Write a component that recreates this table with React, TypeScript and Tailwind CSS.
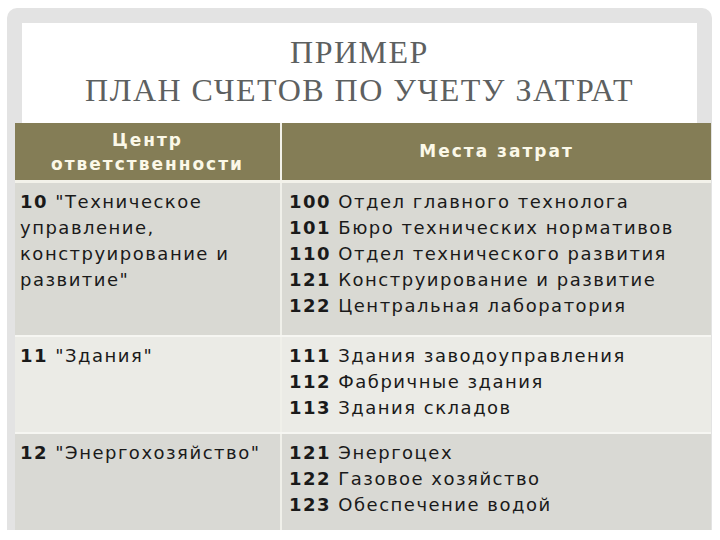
const rows = [
  {
    left: { code: "10", text: '"Техническое управление, конструирование и развитие"' },
    items: [
      ["100", "Отдел главного технолога"],
      ["101", "Бюро технических нормативов"],
      ["110", "Отдел технического развития"],
      ["121", "Конструирование и развитие"],
      ["122", "Центральная лаборатория"],
    ],
    bg: "bg-[#d9d9d3]",
    h: "h-[154px]",
  },
  {
    left: { code: "11", text: '"Здания"' },
    items: [
      ["111", "Здания заводоуправления"],
      ["112", "Фабричные здания"],
      ["113", "Здания складов"],
    ],
    bg: "bg-[#ebebe6]",
    h: "h-[97px]",
  },
  {
    left: { code: "12", text: '"Энергохозяйство"' },
    items: [
      ["121", "Энергоцех"],
      ["122", "Газовое хозяйство"],
      ["123", "Обеспечение водой"],
    ],
    bg: "bg-[#d9d9d4]",
    h: "h-[96px]",
  },
];

export default function App() {
  return (
    <div className="h-[540px] w-[720px] overflow-hidden bg-white pt-[8px] pl-[7px] pr-[8px]">
      <div className="rounded-t-[10px] bg-[#e3e3e3] pt-[15px] pl-[8px] pr-[1px]">
        <div className="ml-[7px] mr-[14px] flex h-[100px] flex-col items-center bg-white pt-[10px] font-['Liberation_Serif',serif] text-[32px] leading-[38px] tracking-[1.5px] text-[#5d6060]">
          <div>ПРИМЕР</div>
          <div>ПЛАН СЧЕТОВ ПО УЧЕТУ ЗАТРАТ</div>
        </div>

        <div className="font-['DejaVu_Sans',sans-serif] text-[#1a1a1a]">
          <div className="grid h-[60px] grid-cols-[265px_1fr] gap-x-[2px] border-b-[3px] border-[#f3f2ea] bg-[#f3f2ea]">
            <div className="flex flex-col items-center justify-center bg-[#847d56] text-[17px] font-bold leading-[24px] tracking-[2px] text-[#fbf8e8]">
              <span>Центр</span>
              <span>ответственности</span>
            </div>
            <div className="flex items-center justify-center bg-[#847d56] text-[17px] font-bold tracking-[2px] text-[#fbf8e8]">
              Места затрат
            </div>
          </div>

          {rows.map((row, i) => (
            <div
              key={i}
              className={`grid grid-cols-[265px_1fr] gap-x-[2px] bg-[#f0f0ea] ${row.h} ${i < rows.length - 1 ? "border-b-[2px] border-[#f6f6f2]" : ""}`}
            >
              <div className={`${row.bg} pt-[6px] pl-[5px] pr-[8px] text-[18px] leading-[26px] tracking-[1.5px]`}>
                <span className="font-bold">{row.left.code}</span> {row.left.text}
              </div>
              <div className={`${row.bg} pt-[6px] pl-[7px] text-[18px] leading-[26px] tracking-[1.5px]`}>
                {row.items.map(([code, name]) => (
                  <div key={code + name} className="whitespace-nowrap">
                    <span className="font-bold">{code}</span> {name}
                  </div>
                ))}
              </div>
            </div>
          ))}
        </div>
      </div>
    </div>
  );
}
